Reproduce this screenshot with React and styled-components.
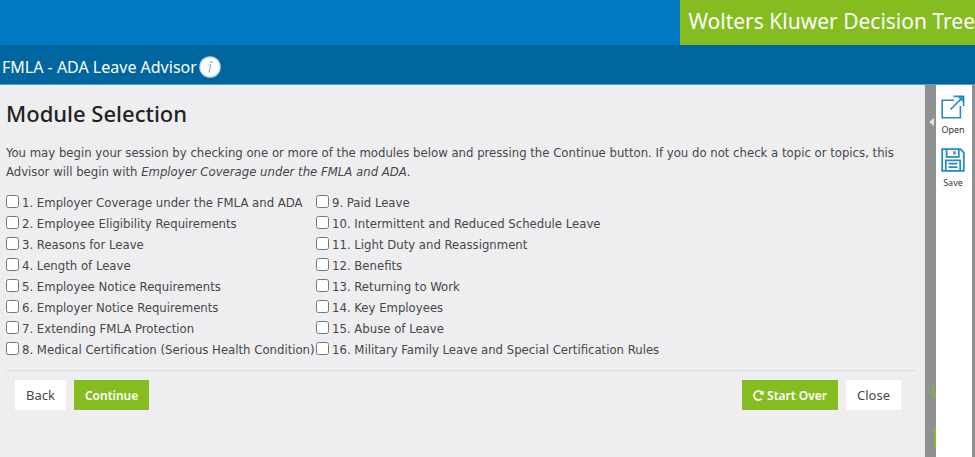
import React, { useState } from 'react'
import styled, { createGlobalStyle } from 'styled-components';
import { FaRedoAlt } from 'react-icons/fa';


const leftModules = [
    'Employer Coverage under the FMLA and ADA',
    'Employee Eligibility Requirements',
    'Reasons for Leave',
    'Length of Leave',
    'Employee Notice Requirements',
    'Employer Notice Requirements',
    'Extending FMLA Protection',
    'Medical Certification (Serious Health Condition)',
];

const rightModules = [
    'Paid Leave',
    'Intermittent and Reduced Schedule Leave',
    'Light Duty and Reassignment',
    'Benefits',
    'Returning to Work',
    'Key Employees',
    'Abuse of Leave',
    'Military Family Leave and Special Certification Rules',
];

function ModuleList({ modules, start, checked, onToggle }) {
    return (
        <ModuleColumn>
            {
                modules.map((name, index) => {
                    const number = start + index;
                    return (
                        <li key={number}>
                            <ModuleLabel>
                                <input
                                    type="checkbox"
                                    checked={checked.includes(number)}
                                    onChange={() => onToggle(number)}
                                />
                                {`${number}. ${name}`}
                            </ModuleLabel>
                        </li>
                    )
                })
            }
        </ModuleColumn>
    )
}

function InfoIcon() {
    return (
        <svg width="22" height="22" viewBox="0 0 22 22" aria-hidden="true">
            <circle cx="11" cy="11" r="10.8" fill="#b9d7ea" />
            <circle cx="11" cy="11" r="9.6" fill="#fff" />
            <circle cx="12.3" cy="6" r="1.1" fill="#7ab0d4" />
            <path d="M9.8 9h2l-1.6 6.4q-.2 1 1.2.5" fill="none" stroke="#7ab0d4" strokeWidth="1.1" />
        </svg>
    )
}

function OpenIcon() {
    return (
        <svg width="24" height="24" viewBox="0 0 24 24" fill="none" stroke="#2588cb" strokeWidth="1.6" aria-hidden="true">
            <path d="M13 5.2H1.2V22.8H19.4V11" />
            <path d="M9.5 14.5L22.6 1.4M12.5 1.4H22.6V11M17.6 1.6L22.4 6.4" />
        </svg>
    )
}

function SaveIcon() {
    return (
        <svg width="24" height="24" viewBox="0 0 24 24" fill="none" stroke="#2588cb" strokeWidth="1.8" aria-hidden="true">
            <path d="M1.2 1.2H19.5L22.8 4.5V22.8H1.2Z" />
            <path d="M5.6 1.4V8.8H17.8V1.4" />
            <path d="M13.4 3.2V6.6" strokeWidth="2.2" />
            <path d="M4.8 22.6V12.4H19.2V22.6M7.6 15.6H16.4M7.6 19.2H16.4" />
        </svg>
    )
}

export default function App() {
    const [checked, setChecked] = useState([]);

    const toggle = (number) => {
        setChecked((prev) => prev.includes(number) ? prev.filter((n) => n !== number) : [...prev, number]);
    }

    return (
        <Page>
            <GlobalStyle />
            <TopBar>
                <Brand>Wolters Kluwer Decision Tree</Brand>
            </TopBar>
            <TitleBar>
                <h1>FMLA - ADA Leave Advisor</h1>
                <PlainButton type="button" aria-label="Information">
                    <InfoIcon />
                </PlainButton>
            </TitleBar>
            <Body>
                <Content>
                    <Heading>Module Selection</Heading>
                    <Intro>
                        You may begin your session by checking one or more of the modules below and pressing the
                        Continue button. If you do not check a topic or topics, this Advisor will begin
                        with <em>Employer Coverage under the FMLA and ADA</em>.
                    </Intro>
                    <Modules>
                        <ModuleList modules={leftModules} start={1} checked={checked} onToggle={toggle} />
                        <ModuleList modules={rightModules} start={9} checked={checked} onToggle={toggle} />
                    </Modules>
                    <Actions>
                        <ButtonGroup>
                            <Button type="button">Back</Button>
                            <Button type="button" $primary>Continue</Button>
                        </ButtonGroup>
                        <ButtonGroup>
                            <Button type="button" $primary onClick={() => setChecked([])}>
                                <FaRedoAlt size={11} />
                                Start Over
                            </Button>
                            <Button type="button">Close</Button>
                        </ButtonGroup>
                    </Actions>
                </Content>
                <Splitter>
                    <PlainButton type="button" aria-label="Expand panel">
                        <svg width="7" height="8" viewBox="0 0 7 8" aria-hidden="true">
                            <path d="M5 0V8L0 4Z" fill="#e4e6e6" />
                        </svg>
                    </PlainButton>
                    <svg width="4" height="64" viewBox="0 0 4 64" aria-hidden="true">
                        <path d="M0.5 0V10.5H4M3 42V64" fill="none" stroke="#85bc20" strokeWidth="2" />
                    </svg>
                </Splitter>
                <Tools>
                    <Tool type="button"><OpenIcon />Open</Tool>
                    <Tool type="button"><SaveIcon />Save</Tool>
                </Tools>
            </Body>
        </Page>
    )
}

const GlobalStyle = createGlobalStyle`
    * {
        box-sizing: border-box;
    }
    body {
        margin: 0;
        color: #474747;
        font-family: "Noto Sans", "Open Sans", sans-serif;
        font-size: 13px;
    }
    button {
        font-family: inherit;
        cursor: pointer;
    }
`;

const Page = styled.div`
    display: flex;
    flex-direction: column;
    min-height: 100vh;
`;

const TopBar = styled.header`
    display: flex;
    justify-content: flex-end;
    height: 45px;
    background: #007ac3;
`;

const Brand = styled.div`
    padding: 0 0 0 8px;
    background: #85bc20;
    color: #fff;
    font-size: 21px;
    line-height: 42px;
    white-space: nowrap;
`;

const TitleBar = styled.div`
    display: flex;
    align-items: center;
    gap: 2px;
    height: 40px;
    padding: 4px 2px 0;
    background: #00669f;
    border-bottom: 1px solid #5a9bc4;

    h1 {
        margin: 0;
        color: #fff;
        font-size: 16px;
        font-weight: 400;
        line-height: 24px;
    }
`;

const PlainButton = styled.button`
    display: flex;
    padding: 0;
    border: 0;
    background: none;
`;

const Body = styled.div`
    display: flex;
    flex: 1;
    border-right: 3px solid #8d9191;
`;

const Content = styled.main`
    flex: 1;
    min-width: 0;
    padding: 12px 10px 16px 6px;
    background: #eeeef0;
`;

const Heading = styled.h2`
    margin: 0 0 14px;
    color: #222;
    font-size: 22px;
    font-weight: 500;
    line-height: 32px;
`;

const Intro = styled.p`
    margin: 0 0 11px;
    font-family: "DejaVu Sans Condensed", "DejaVu Sans", sans-serif;
    line-height: 19px;
`;

const Modules = styled.div`
    display: flex;
    padding-bottom: 10px;
    border-bottom: 1px solid #d9dadd;
    font-family: "DejaVu Sans Condensed", "DejaVu Sans", sans-serif;
`;

const ModuleColumn = styled.ul`
    flex: none;
    min-width: 310px;
    margin: 0;
    padding: 0;
    list-style: none;
`;

const ModuleLabel = styled.label`
    display: flex;
    align-items: center;
    line-height: 21px;
    white-space: nowrap;

    input {
        width: 13px;
        height: 13px;
        margin: 0 3px 2px 0;
    }
`;

const Actions = styled.div`
    display: flex;
    justify-content: space-between;
    padding: 9px 14px 0 9px;
`;

const ButtonGroup = styled.div`
    display: flex;
    gap: 8px;
`;

const Button = styled.button`
    display: flex;
    align-items: center;
    gap: 3px;
    height: 30px;
    padding: 0 11px;
    border: 0;
    background: ${({ $primary }) => $primary ? '#85bc20' : '#fff'};
    color: ${({ $primary }) => $primary ? '#fff' : '#474747'};
    font-size: ${({ $primary }) => $primary ? '12px' : '13px'};
    font-weight: ${({ $primary }) => $primary ? 600 : 400};
`;

const Splitter = styled.div`
    display: flex;
    flex-direction: column;
    justify-content: space-between;
    align-items: flex-end;
    width: 11px;
    padding: 33px 0 8px;
    background: #8d9191;
`;

const Tools = styled.aside`
    display: flex;
    flex-direction: column;
    gap: 10px;
    width: 36px;
    padding: 10px 2px 0 0;
    background: #fff;
`;

const Tool = styled.button`
    display: flex;
    flex-direction: column;
    align-items: center;
    gap: 3px;
    padding: 0;
    border: 0;
    background: none;
    color: #333;
    font-size: 9px;
    line-height: 16px;
`;
